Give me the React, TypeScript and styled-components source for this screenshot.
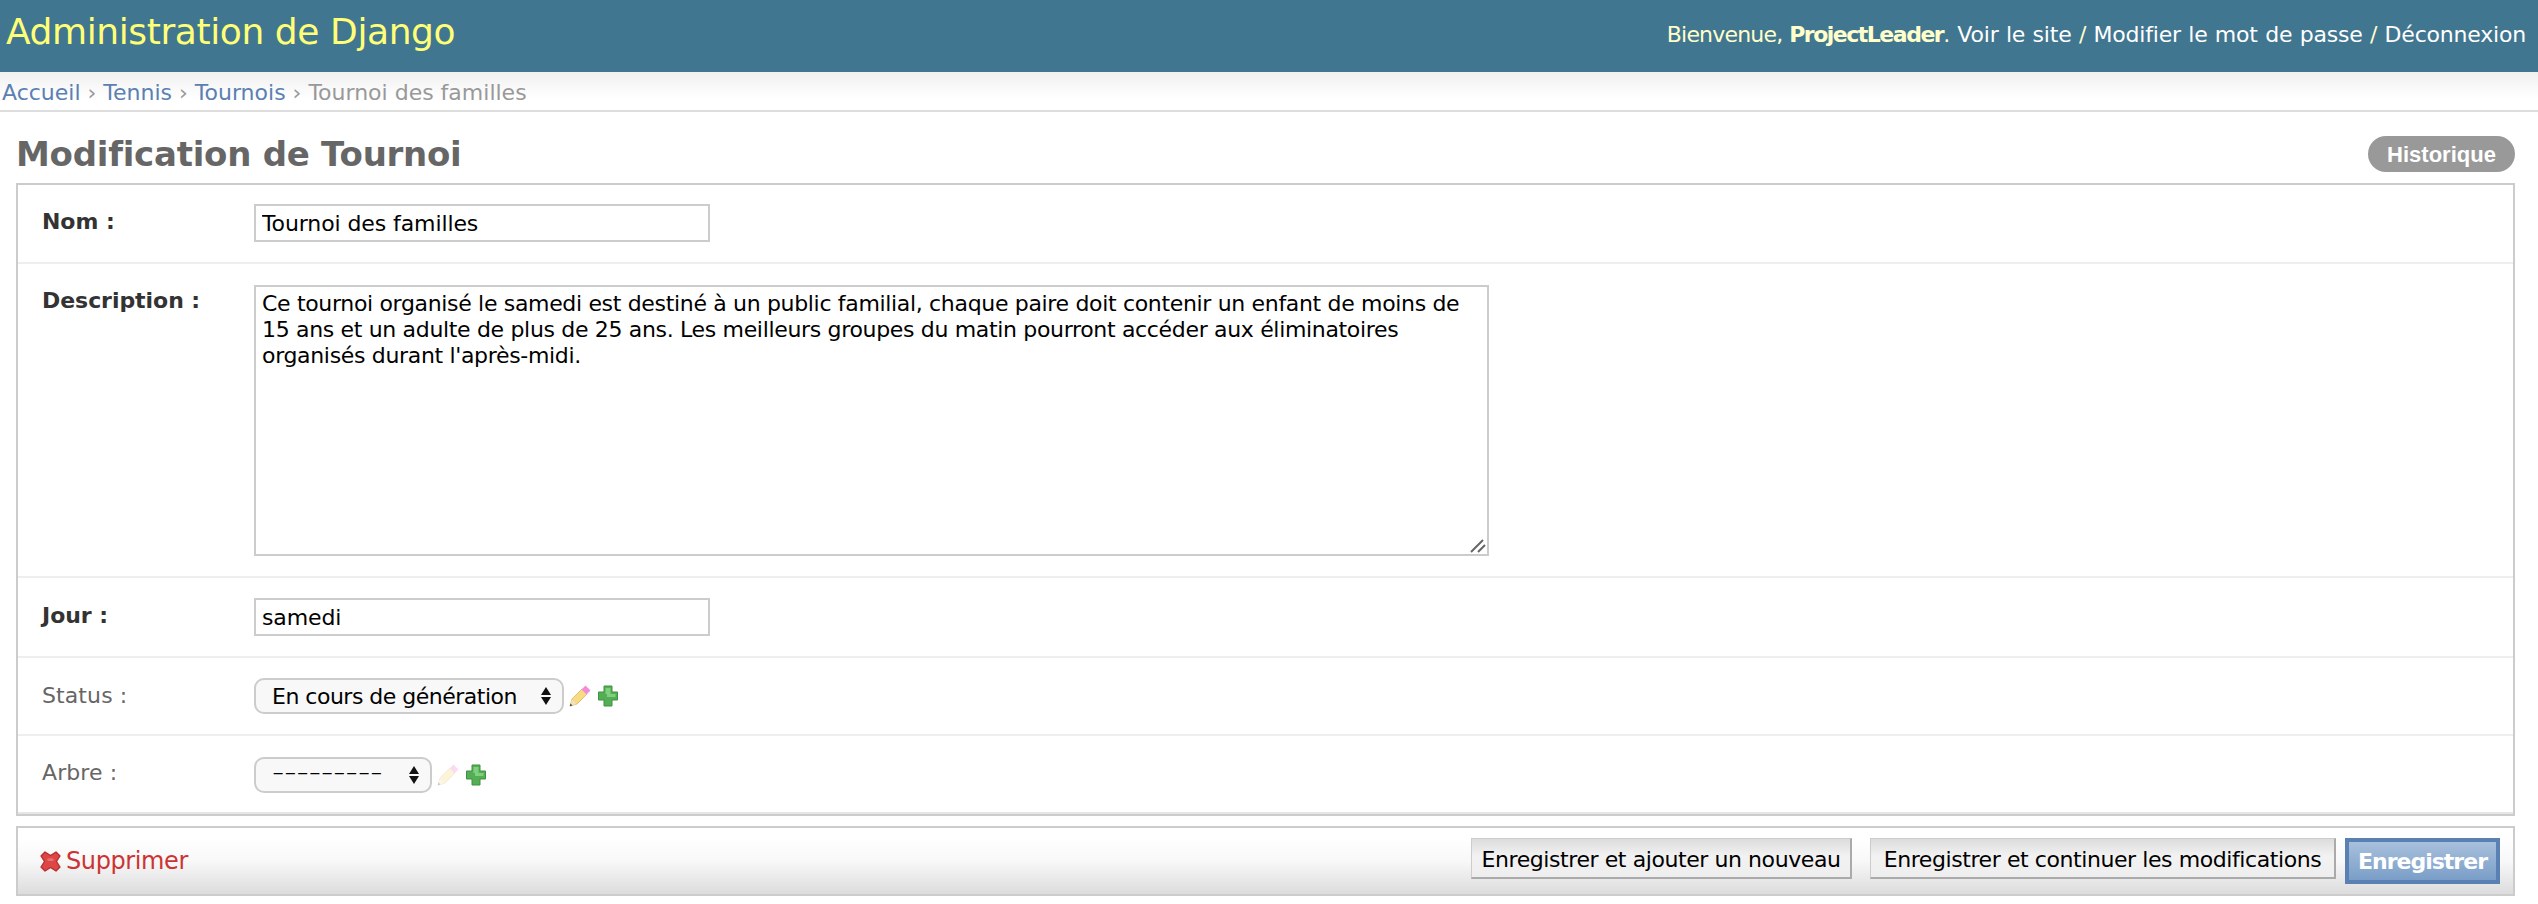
import React from "react";
import styled, { createGlobalStyle } from "styled-components";

const Global = createGlobalStyle`
  html, body { margin: 0; padding: 0; background: #fff; }
  body { font-family: "DejaVu Sans", "Liberation Sans", sans-serif; color: #333; }
`;

const Page = styled.div`
  width: 2538px;
  height: 904px;
  overflow: hidden;
  display: flex;
  flex-direction: column;
`;

const Header = styled.header`
  height: 72px;
  background: #417690;
  display: flex;
  align-items: center;
  justify-content: space-between;
  padding: 0 12px 0 6px;
  box-sizing: border-box;
`;

const Brand = styled.h1`
  margin: 0 0 10px;
  font-size: 36px;
  font-weight: 400;
  color: #ffff77;
  letter-spacing: -0.4px;
`;

const UserTools = styled.div`
  font-size: 22px;
  color: #ffc;
  margin-bottom: 3px;
  letter-spacing: -0.2px;
  word-spacing: 0.6px;
  white-space: nowrap;
`;

const Welcome = styled.span`
  letter-spacing: -0.8px;
`;

const UserName = styled.strong`
  font-weight: 700;
  letter-spacing: -1.5px;
`;

const ToolLink = styled.a`
  color: #fff;
  text-decoration: none;
`;

const Breadcrumbs = styled.nav`
  height: 40px;
  box-sizing: border-box;
  padding: 3px 0 0 2px;
  display: flex;
  align-items: center;
  font-size: 22px;
  letter-spacing: 0;
  color: #999;
  border-bottom: 2px solid #ddd;
  background: linear-gradient(#f0f0f0, #ffffff 70%);
  white-space: pre;
`;

const Crumb = styled.a`
  color: #5b80b2;
  text-decoration: none;
`;

const Content = styled.main`
  padding: 0 23px 0 16px;
  display: flex;
  flex-direction: column;
`;

const TitleRow = styled.div`
  height: 71px;
  display: flex;
  justify-content: space-between;
  align-items: flex-start;
`;

const Title = styled.h2`
  margin: 22px 0 0;
  font-size: 34px;
  font-weight: 700;
  color: #666;
  letter-spacing: -0.26px;
`;

const HistoryButton = styled.a`
  margin-top: 24px;
  width: 147px;
  height: 36px;
  box-sizing: border-box;
  padding-top: 2px;
  border-radius: 18px;
  background: #999;
  color: #fff;
  font-family: "Liberation Sans", sans-serif;
  font-size: 22px;
  font-weight: 700;
  display: flex;
  align-items: center;
  justify-content: center;
`;

const Module = styled.section`
  border: 2px solid #ccc;
  display: flex;
  flex-direction: column;
`;

const Row = styled.div<{ $h: number; $top: number; $last?: boolean }>`
  height: ${(p) => p.$h}px;
  box-sizing: border-box;
  padding: ${(p) => p.$top}px 0 0 24px;
  display: flex;
  align-items: flex-start;
  border-bottom: 2px solid ${(p) => (p.$last ? "#e6e6e6" : "#eee")};
`;

const Label = styled.label<{ $required?: boolean; $top: number }>`
  width: 212px;
  flex: none;
  padding-top: ${(p) => p.$top}px;
  font-size: 22px;
  letter-spacing: ${(p) => (p.$required ? "-0.05px" : "0.1px")};
  font-weight: ${(p) => (p.$required ? 700 : 400)};
  color: ${(p) => (p.$required ? "#333" : "#666")};
`;

const TextInput = styled.input`
  width: 456px;
  height: 38px;
  box-sizing: border-box;
  border: 2px solid #ccc;
  padding: 2px 6px;
  margin: 0;
  font: 22px "DejaVu Sans", sans-serif;
  letter-spacing: -0.1px;
  color: #000;
  background: #fff;
  outline: none;
  border-radius: 0;
`;

const AreaWrap = styled.div`
  position: relative;
  width: 1235px;
  height: 271px;
`;

const TextArea = styled.textarea`
  display: block;
  width: 100%;
  height: 100%;
  box-sizing: border-box;
  border: 2px solid #ccc;
  padding: 4px 6px 3px;
  margin: 0;
  font: 22px/26px "DejaVu Sans", sans-serif;
  letter-spacing: -0.33px;
  color: #000;
  background: #fff;
  outline: none;
  border-radius: 0;
  resize: none;
`;

const Grip = styled.svg`
  position: absolute;
  right: 3px;
  bottom: 3px;
  width: 16px;
  height: 14px;
`;

const Field = styled.div`
  display: flex;
  align-items: center;
  height: 36px;
`;

const SelectWrap = styled.div<{ $w: number }>`
  position: relative;
  width: ${(p) => p.$w}px;
  height: 36px;
`;

const Select = styled.select`
  appearance: none;
  width: 100%;
  height: 100%;
  box-sizing: border-box;
  border: 2px solid #ccc;
  border-radius: 10px;
  background: #f8f8f8;
  padding: 0 16px;
  margin: 0;
  font: 22px "DejaVu Sans", sans-serif;
  letter-spacing: -0.5px;
  color: #000;
  outline: none;
`;

const BlankChoice = styled.div`
  width: 100%;
  height: 100%;
  box-sizing: border-box;
  border: 2px solid #ccc;
  border-radius: 10px;
  background: #f8f8f8;
  padding: 0 16px 8px;
  display: flex;
  align-items: center;
  font: 200 34px/1 "DejaVu Sans", sans-serif;
  color: #000;
`;

const Arrows = styled.svg`
  position: absolute;
  right: 13px;
  top: 9px;
  width: 10px;
  height: 18px;
`;

const IconLink = styled.a<{ $dim?: boolean; $gap: number }>`
  display: inline-flex;
  margin-left: ${(p) => p.$gap}px;
  opacity: ${(p) => (p.$dim ? 0.3 : 1)};
`;

const SubmitRow = styled.footer`
  margin-top: 10px;
  height: 70px;
  box-sizing: border-box;
  border: 2px solid #ccc;
  background: linear-gradient(#fff 15%, #f8f8f8 50%, #dcdcdc);
  padding: 10px 13px 0 22px;
  display: flex;
  align-items: flex-start;
`;

const DeleteLink = styled.a`
  display: flex;
  align-items: center;
  gap: 5px;
  margin-top: 9px;
  margin-right: auto;
  font-size: 24px;
  letter-spacing: -0.4px;
  color: #cc3434;
  text-decoration: none;
`;

const Button = styled.button<{ $w: number }>`
  width: ${(p) => p.$w}px;
  height: 41px;
  box-sizing: border-box;
  border: 1px solid #ccc;
  border-bottom: 2px solid #aaa;
  border-right: 2px solid #aaa;
  background: linear-gradient(#dcdcdc, #f2f2f2 45%, #eee);
  font: 22px "DejaVu Sans", sans-serif;
  letter-spacing: -0.42px;
  color: #000;
  padding: 2px 0 0;
  margin-right: 18px;
  white-space: nowrap;
`;

const SaveButton = styled.button`
  width: 155px;
  height: 46px;
  box-sizing: border-box;
  margin: 0 0 0 -9px;
  padding: 0;
  border: 4px solid #5b80b2;
  background: linear-gradient(#a8c0dc, #7a9ec8);
  font: 700 22px "DejaVu Sans", sans-serif;
  letter-spacing: -1px;
  color: #fff;
  white-space: nowrap;
`;

const Pencil = () => (
  <svg width="22" height="22" viewBox="0 0 22 22">
    <path d="M1 21 L3 14 L13 4 L18 9 L8 19 Z" fill="#f8dc84" stroke="#dcb357" strokeWidth="0.8" />
    <path d="M12.5 4.5 L16.5 0.5 L21.5 5.5 L17.5 9.5 Z" fill="#f38bdc" />
    <path d="M1 21 L3 14.5 L7.5 19 Z" fill="#efe2c4" />
    <path d="M0.8 21.3 L1.6 18.6 L3.4 20.4 Z" fill="#444" />
  </svg>
);

const Plus = () => (
  <svg width="20" height="22" viewBox="0 0 20 22">
    <path d="M6 1 H14 V7 H19.5 V15 H14 V21 H6 V15 H0.5 V7 H6 Z" fill="#55ad55" stroke="#3c933f" strokeWidth="1" />
    <path d="M7.5 3 H12.5 V9 H17.5 V12 H9 V9 H7.5 Z" fill="#7fcf7f" />
  </svg>
);

const Cross = () => (
  <svg width="21" height="21" viewBox="0 0 21 21">
    <path d="M5 1 L10.5 4.5 L16 1 L20 5 L16.5 10.5 L20 16 L16 20 L10.5 16.5 L5 20 L1 16 L4.5 10.5 L1 5 Z" fill="#dd4646" stroke="#b92c2c" strokeWidth="1.3" strokeLinejoin="round" />
    <path d="M7 8 L10.5 7 L14 8 L13 10 H8 Z" fill="#ea7070" />
  </svg>
);

const SelectArrows = () => (
  <Arrows viewBox="0 0 10 18">
    <path d="M5 0 L10 8 H0 Z M5 18 L0 10 H10 Z" fill="#111" />
  </Arrows>
);

const description =
  "Ce tournoi organisé le samedi est destiné à un public familial, chaque paire doit contenir un enfant de moins de 15 ans et un adulte de plus de 25 ans. Les meilleurs groupes du matin pourront accéder aux éliminatoires organisés durant l'après-midi.";

export default function App() {
  return (
    <Page>
      <Global />
      <Header>
        <Brand>Administration de Django</Brand>
        <UserTools>
          <Welcome>Bienvenue, </Welcome><UserName>ProjectLeader</UserName>. <ToolLink>Voir le site</ToolLink> / <ToolLink>Modifier le mot de passe</ToolLink> / <ToolLink>Déconnexion</ToolLink>
        </UserTools>
      </Header>
      <Breadcrumbs>
        <Crumb>Accueil</Crumb> › <Crumb>Tennis</Crumb> › <Crumb>Tournois</Crumb> › Tournoi des familles
      </Breadcrumbs>
      <Content>
        <TitleRow>
          <Title>Modification de Tournoi</Title>
          <HistoryButton>Historique</HistoryButton>
        </TitleRow>
        <Module>
          <Row $h={79} $top={19}>
            <Label $required $top={5}>Nom :</Label>
            <TextInput readOnly value="Tournoi des familles" />
          </Row>
          <Row $h={314} $top={21}>
            <Label $required $top={3}>Description :</Label>
            <AreaWrap>
              <TextArea readOnly value={description} />
              <Grip viewBox="0 0 16 14">
                <path d="M1 13 L13 1 M8 13 L15 6" stroke="#666" strokeWidth="2" fill="none" />
              </Grip>
            </AreaWrap>
          </Row>
          <Row $h={80} $top={20}>
            <Label $required $top={5}>Jour :</Label>
            <TextInput readOnly value="samedi" />
          </Row>
          <Row $h={78} $top={20}>
            <Label $top={5}>Status :</Label>
            <Field>
              <SelectWrap $w={310}>
                <Select defaultValue="g">
                  <option value="g">En cours de génération</option>
                </Select>
                <SelectArrows />
              </SelectWrap>
              <IconLink $gap={5}><Pencil /></IconLink>
              <IconLink $gap={7}><Plus /></IconLink>
            </Field>
          </Row>
          <Row $h={78} $top={21} $last>
            <Label $top={3}>Arbre :</Label>
            <Field>
              <SelectWrap $w={178}>
                <BlankChoice role="combobox">---------</BlankChoice>
                <SelectArrows />
              </SelectWrap>
              <IconLink $gap={5} $dim><Pencil /></IconLink>
              <IconLink $gap={7}><Plus /></IconLink>
            </Field>
          </Row>
        </Module>
        <SubmitRow>
          <DeleteLink><Cross />Supprimer</DeleteLink>
          <Button $w={381}>Enregistrer et ajouter un nouveau</Button>
          <Button $w={466}>Enregistrer et continuer les modifications</Button>
          <SaveButton>Enregistrer</SaveButton>
        </SubmitRow>
      </Content>
    </Page>
  );
}
